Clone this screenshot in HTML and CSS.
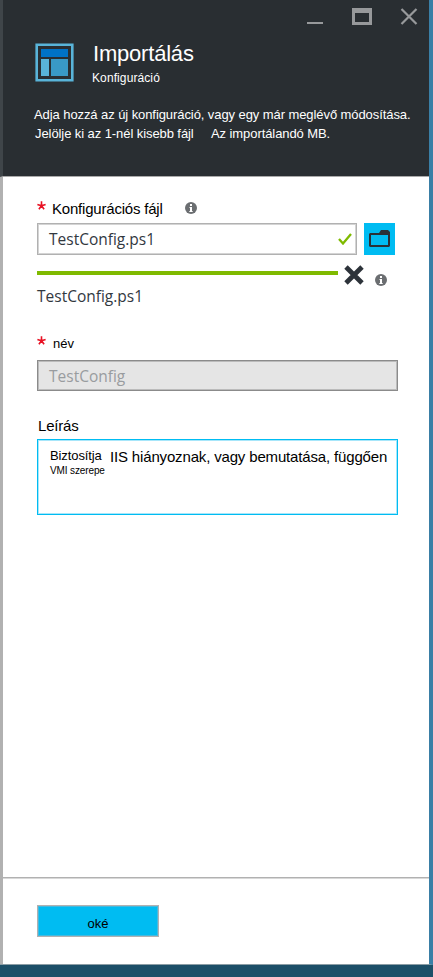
FILE: index.html
```
<!DOCTYPE html>
<html lang="hu">
<head>
<meta charset="utf-8">
<title>Importálás</title>
<link rel="stylesheet" href="styles.css">
</head>
<body>
<div class="blade">
  <header class="head">
    <div class="controls">
      <svg width="112" height="20" viewBox="0 0 112 20">
        <path d="M0 17h16v2H0z" fill="#97999b"/>
        <path fill-rule="evenodd" d="M45 3h20v17H45zM48 8v9h14V8z" fill="#97999b"/>
        <path d="M94.500 4l15 15M109.500 4l-15 15" stroke="#97999b" stroke-width="2.200" fill="none"/>
      </svg>
    </div>
    <div class="brand">
      <svg class="logo" width="39" height="39" viewBox="0 0 39 39">
        <path d="M1.700 1.700h35.600v35.600H1.700z" fill="none" stroke="#59b4d9" stroke-width="2.600"/>
        <path d="M6 6h27v8H6z" fill="#0072c6"/>
        <path d="M6 16h8v17H6z" fill="#59b4d9"/>
        <path d="M16 16h17v17H16z" fill="#3999c6"/>
      </svg>
      <div>
        <h1 class="title">Importálás</h1>
        <div class="subtitle">Konfiguráció</div>
      </div>
    </div>
    <div class="intro">
      <div>Adja hozzá az új konfiguráció, vagy egy már meglévő módosítása.</div>
      <div class="intro-second"><span class="size">Jelölje ki az 1-nél kisebb fájl</span><span class="unit">Az importálandó MB.</span></div>
    </div>
  </header>
  <main class="form">
    <div class="label file-label">
      <svg class="star" width="9" height="9" viewBox="0 0 9 9"><path d="M4.500 4.700V.2M4.500 4.700L.4 3.400M4.500 4.700l4.100-1.300M4.500 4.700L1.900 8.300M4.500 4.700l2.600 3.600" stroke="#e81123" stroke-width="1.600"/></svg>
      <span class="file-text">Konfigurációs fájl</span>
      <svg class="info" width="12" height="12" viewBox="0 0 12 12"><circle cx="6" cy="6" r="6" fill="#6b6e71"/><path d="M5 2h2v2H5zM4.500 5H7v4h.7v1H4.300V9H5V6h-.5z" fill="#fff"/></svg>
    </div>
    <div class="file-row">
      <div class="input file-input"><span class="file-value">TestConfig.ps1</span>
        <svg width="14" height="12" viewBox="0 0 14 12"><path d="M1 6l4 4.500L13 1" fill="none" stroke="#7fba00" stroke-width="2.300"/></svg>
      </div>
      <div class="browse">
        <svg width="21" height="18" viewBox="0 0 21 18"><path fill-rule="evenodd" d="M1 3h9l2-3h7l2 2v14l-1 1H1l-1-1V4zM2 5v10h17V5z" fill="#2a3137"/></svg>
      </div>
    </div>
    <div class="upload">
      <div class="progress"></div>
      <svg class="remove" width="20" height="20" viewBox="0 0 20 20"><path d="M2 2l16 16M18 2L2 18" stroke="#2d333a" stroke-width="4.800"/></svg>
      <svg class="upload-info" width="12" height="12" viewBox="0 0 12 12"><circle cx="6" cy="6" r="6" fill="#6b6e71"/><path d="M5 2h2v2H5zM4.500 5H7v4h.7v1H4.300V9H5V6h-.5z" fill="#fff"/></svg>
    </div>
    <div class="filename">TestConfig.ps1</div>
    <div class="label name-label">
      <svg class="star" width="9" height="9" viewBox="0 0 9 9"><path d="M4.500 4.700V.2M4.500 4.700L.4 3.400M4.500 4.700l4.100-1.300M4.500 4.700L1.900 8.300M4.500 4.700l2.600 3.600" stroke="#e81123" stroke-width="1.600"/></svg>
      <span class="name-text">név</span>
    </div>
    <div class="input name-input">TestConfig</div>
    <div class="desc-label">Leírás</div>
    <div class="desc">
      <div class="desc-left"><div class="desc-word">Biztosítja</div><div class="desc-small">VMI szerepe</div></div>
      <div class="desc-main">IIS hiányoznak, vagy bemutatása, függően</div>
    </div>
  </main>
  <footer class="foot"><div class="ok">oké</div></footer>
</div>
</body>
</html>
```
FILE: styles.css
```
* { box-sizing: border-box; }
body {
  margin: 0;
  width: 433px;
  height: 977px;
  overflow: hidden;
  background: #1c4f68;
  color: #000;
  font-family: "Liberation Sans", Arial, sans-serif;
  white-space: nowrap;
}
svg { display: block; flex: none; }
.blade {
  display: flex;
  flex-direction: column;
  height: 965px;
  border-right: 4px solid #3a7fa6;
  border-bottom: 1px solid #8b9da5;
}
.head {
  height: 177px;
  flex: none;
  border-left: 3px solid #3f4549;
  border-bottom: 1px solid #aaa;
  background: #292e32;
  color: #fff;
}
.controls { display: flex; justify-content: flex-end; padding: 5px 10px 0 0; height: 43px; }
.brand { display: flex; gap: 18px; padding-left: 32px; height: 62px; }
.title { margin: -2px 0 0 1px; font-size: 22px; line-height: 26px; font-weight: 400; letter-spacing: -0.2px; }
.subtitle { margin-top: 4px; font-size: 12px; line-height: 14px; letter-spacing: 0.1px; }
.intro { padding-left: 31px; font-size: 13px; line-height: 19px; letter-spacing: -0.08px; }
.intro-second { display: flex; padding-left: 1px; }
.size { width: 176px; }
.form { flex: 1; border-left: 3px solid #b1b1b1; padding: 24px 31px 0 34px; background: #fff; }
.label { display: flex; }
.star { margin-right: 6px; }
.file-label { height: 22px; }
.file-text { width: 133px; margin-top: -1px; font-size: 15px; line-height: 17px; letter-spacing: -0.2px; }
.file-label .info { margin-top: 1px; }
.file-row { display: flex; gap: 7px; }
.input {
  display: flex;
  align-items: center;
  border: 1px solid #b1b1b1;
  outline: 1px solid #d4d4d4;
  outline-offset: -2px;
  padding-left: 11px;
  color: #32383f;
  font-family: "Open Sans", "Noto Sans", sans-serif;
  font-size: 15.5px;
}
.file-input { width: 320px; height: 32px; justify-content: space-between; padding-right: 4px; }
.browse { width: 31px; height: 32px; display: flex; align-items: center; justify-content: center; background: #00bcf2; }
.upload { display: flex; height: 31px; }
.progress { width: 301px; height: 4px; margin-top: 16px; background: #7fba00; }
.remove { margin: 10px 0 0 6px; }
.upload-info { margin: 19px 0 0 11px; }
.filename { height: 50px; font-family: "Open Sans", "Noto Sans", sans-serif; font-size: 15.5px; line-height: 21px; color: #32383f; }
.name-label { height: 24px; }
.name-text { margin-left: 1px; font-size: 13px; line-height: 15px; }
.name-input { height: 31px; background: #e5e5e5; border-color: #8b8b8b; outline-color: #bbb; color: #999c9f; }
.desc-label { margin: 26px 0 4px 1px; font-size: 15px; line-height: 18px; letter-spacing: -0.2px; }
.desc { display: flex; height: 76px; border: 1px solid #00bcf2; outline: 1px solid #a7e6fa; outline-offset: -2px; padding: 8px 0 0 12px; }
.desc-left { width: 60px; }
.desc-word { font-size: 13px; line-height: 15px; letter-spacing: -0.1px; }
.desc-small { margin-top: 1px; font-size: 10px; line-height: 13px; letter-spacing: -0.12px; }
.desc-main { font-size: 15px; line-height: 18px; letter-spacing: -0.16px; }
.foot { height: 87px; flex: none; padding: 27px 0 0 34px; border-left: 3px solid #b1b1b1; border-top: 1px solid #b1b1b1; background: #fff; box-shadow: inset 0 1px #d8d8d8; }
.ok { width: 122px; height: 32px; border: 1px solid #b1b1b1; background: #00bcf2; box-shadow: inset 0 0 0 1px #45b9de; text-align: center; font-size: 13px; line-height: 35px; }
```
